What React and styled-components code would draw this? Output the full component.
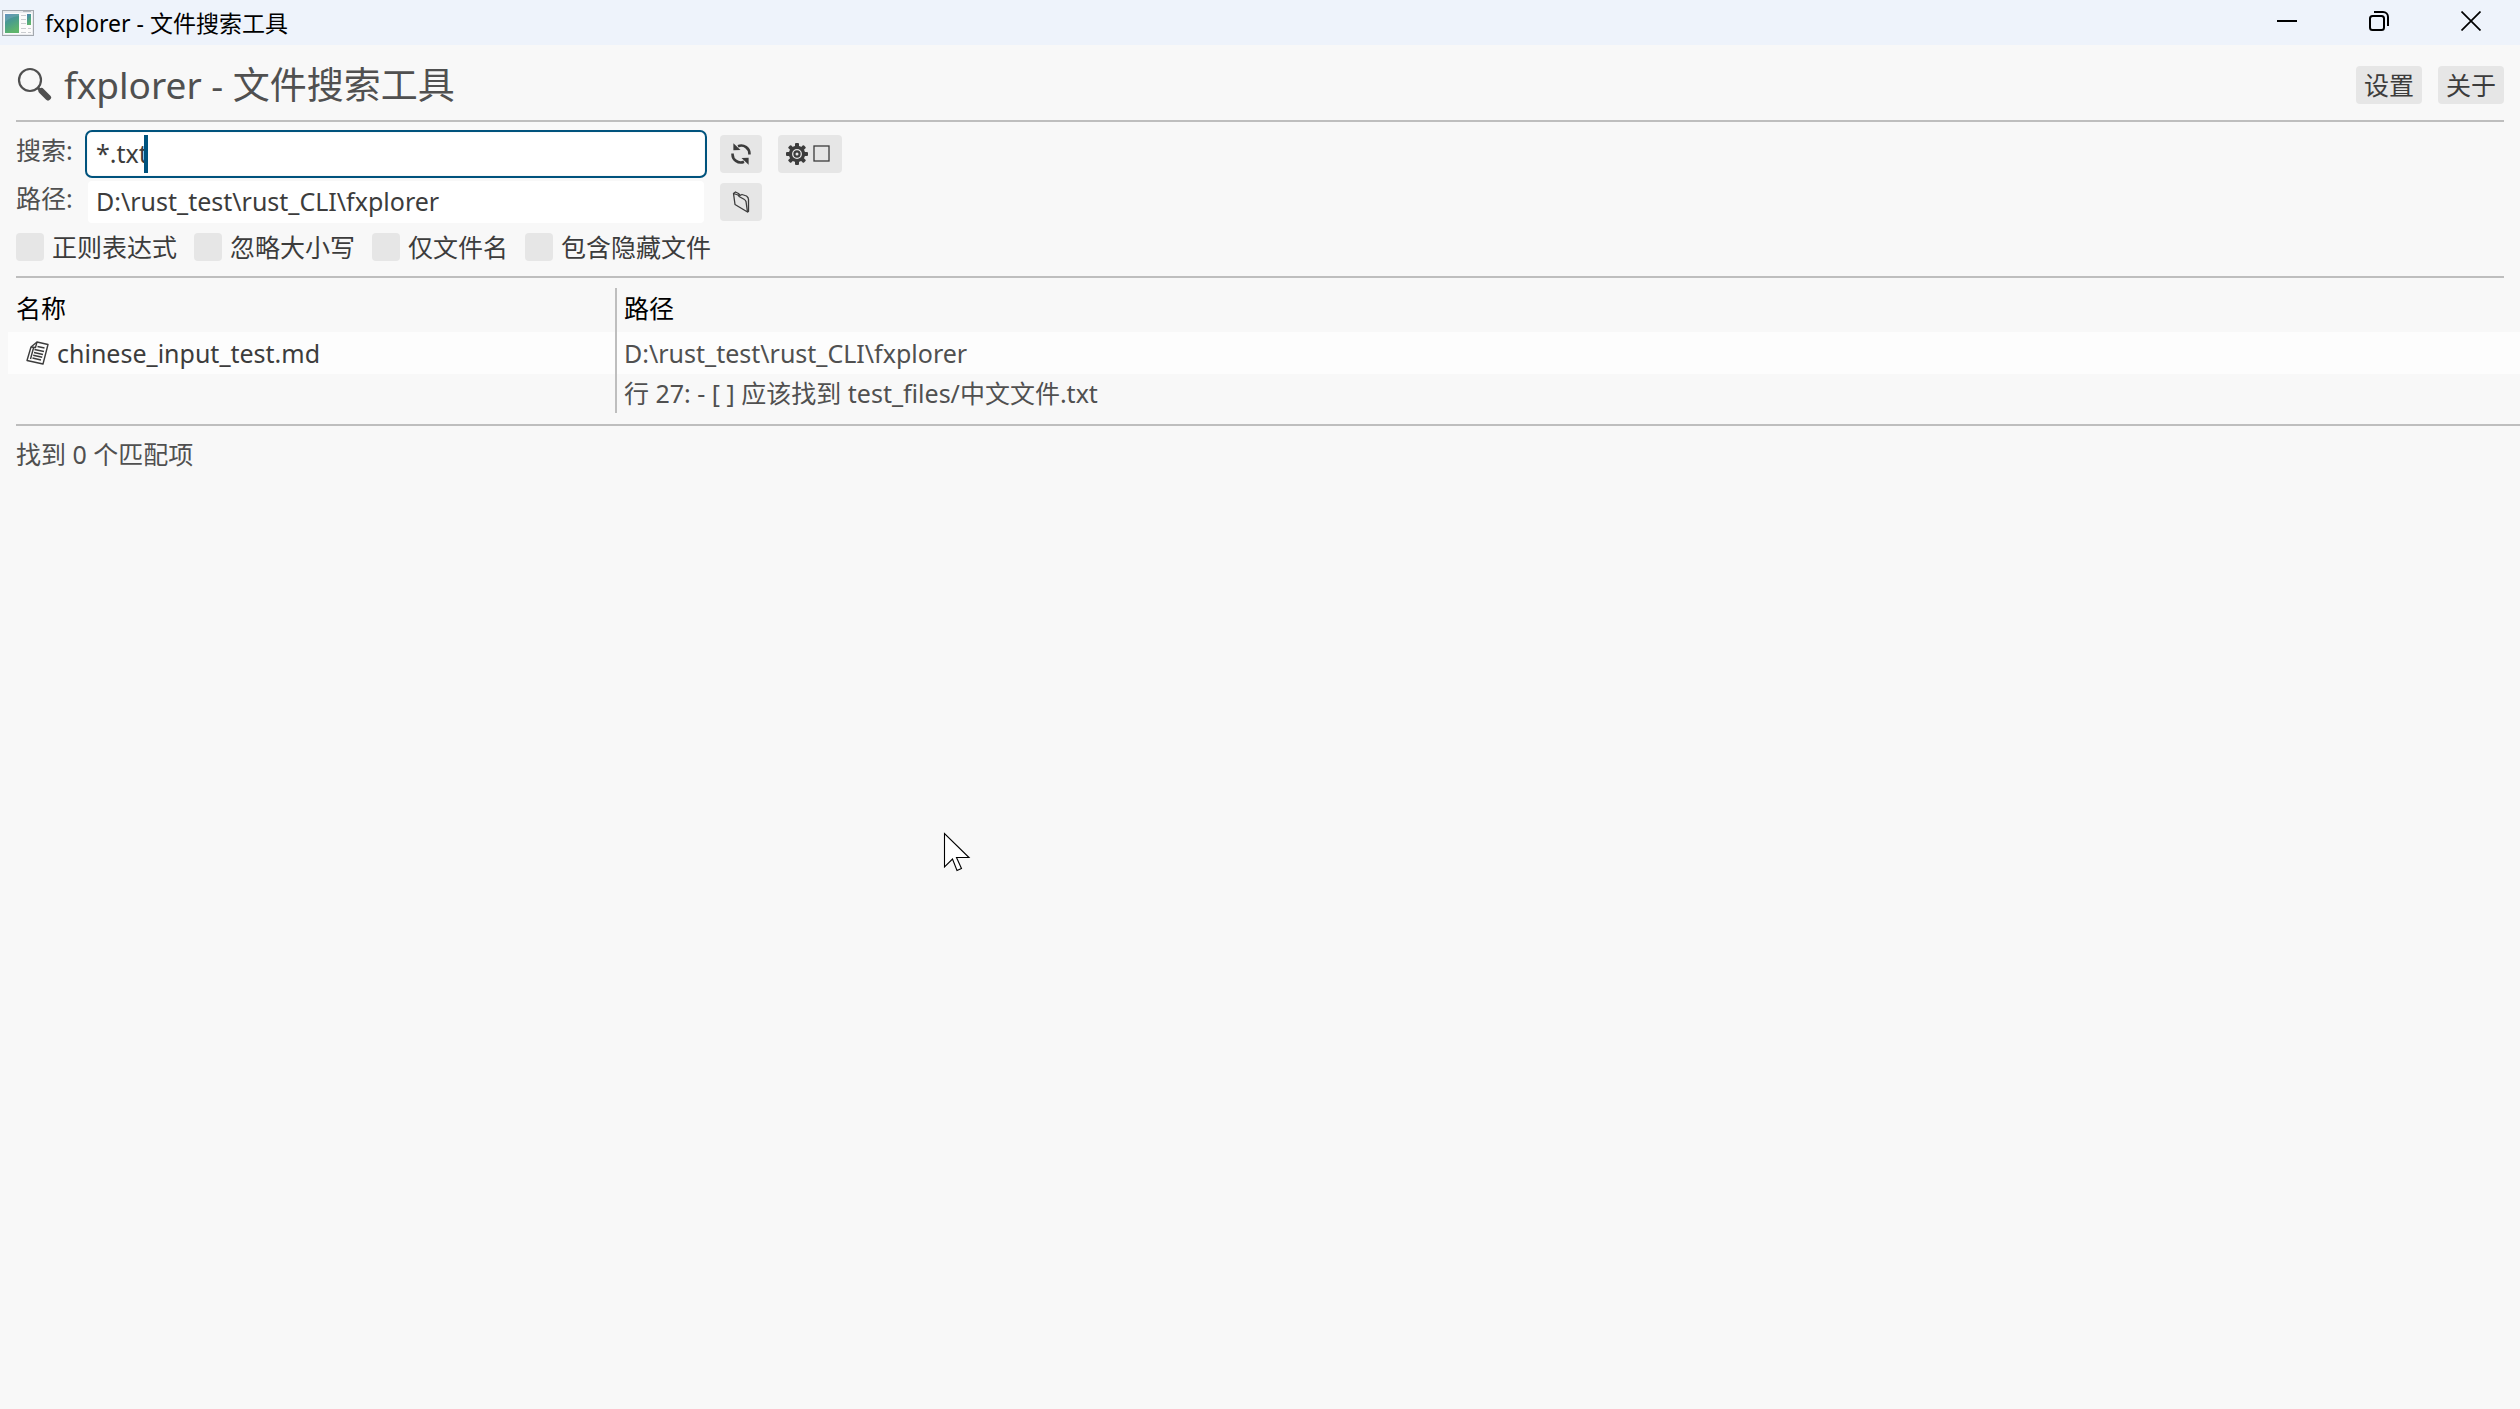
import React from "react";
import styled, { createGlobalStyle, css } from "styled-components";

const GlobalStyle = createGlobalStyle`
  *, *::before, *::after { box-sizing: border-box; }
  body {
    margin: 0;
    background: #f8f8f8;
    color: #505050;
    font-family: "Noto Sans", "Noto Sans CJK SC", sans-serif;
    font-size: 25px;
    line-height: 40px;
  }
  button, input { font: inherit; color: inherit; }
`;

const Window = styled.div`
  min-height: 100vh;
  display: flex;
  flex-direction: column;
`;

const TitleBar = styled.header`
  height: 45px;
  padding: 0 3px 0 2px;
  display: flex;
  align-items: center;
  background: #eef3fb;
  color: #000;
`;

const WindowTitle = styled.span`
  margin-left: 11px;
  flex: 1;
  font-size: 23px;
  line-height: 44px;
`;

const WindowButton = styled.button`
  width: 92px;
  height: 42px;
  align-self: flex-start;
  display: grid;
  place-items: center;
  border: 0;
  padding: 0;
  background: transparent;
`;

const Toolbar = styled.div`
  display: flex;
  align-items: center;
  gap: 16px;
  padding: 14px 16px 10px;
`;

const Heading = styled.h1`
  margin: 0;
  flex: 1;
  display: flex;
  align-items: center;
  gap: 12px;
  font-size: 37px;
  font-weight: 400;
  line-height: 51px;
`;

const Button = styled.button`
  height: 38px;
  min-width: 42px;
  padding: 0 8px;
  display: flex;
  align-items: center;
  justify-content: center;
  gap: 5px;
  border: 0;
  border-radius: 4px;
  background: #e6e6e6;
  color: #3c3c3c;
  line-height: 38px;
`;

const Divider = styled.hr`
  height: 2px;
  margin: 0 ${(p) => (p.$toEdge ? 0 : 16)}px 0 16px;
  border: 0;
  background: #bebebe;
`;

const Form = styled.form`
  padding: 8px 16px;
`;

const FieldRow = styled.div`
  display: flex;
  align-items: center;
  height: 48px;
  gap: 16px;
`;

const FieldLabel = styled.label`
  width: 56px;
  height: 48px;
  white-space: nowrap;
`;

const Field = styled.div`
  position: relative;
  width: 616px;
  height: 42px;
`;

const TextInput = styled.input`
  display: block;
  width: 100%;
  height: 42px;
  padding: 0 8px 2px;
  border: 0;
  border-radius: 4px;
  background: #fff;
  color: #3c3c3c;
  caret-color: transparent;
  ${(p) =>
    p.$active &&
    css`
      outline: 2px solid #00537d;
      outline-offset: 1px;
    `}
`;

const Caret = styled.span`
  position: absolute;
  left: 56px;
  top: 2px;
  width: 4px;
  height: 38px;
  background: #00537d;
`;

const Options = styled.div`
  display: flex;
  gap: 17px;
  height: 42px;
`;

const Option = styled.label`
  display: flex;
  align-items: center;
  gap: 8px;
  color: #3c3c3c;
`;

const Checkbox = styled.input`
  appearance: none;
  width: 28px;
  height: 28px;
  margin: 0;
  border-radius: 4px;
  background: #e6e6e6;
`;

const Results = styled.table`
  width: calc(100% - 8px);
  margin: 10px 0 11px 8px;
  border-collapse: collapse;
  table-layout: fixed;
  text-align: left;

  th, td { padding: 0 8px; vertical-align: top; }
  th + th, td + td { padding-left: 7px; border-left: 2px solid #bebebe; }
`;

const NameColumn = styled.col`
  width: 608px;
`;

const HeadCell = styled.th`
  height: 44px;
  color: #000;
  font-weight: 400;
`;

const Row = styled.tr`
  height: ${(p) => (p.$striped ? 42 : 39)}px;
  line-height: ${(p) => (p.$striped ? 42 : 39)}px;
  background: ${(p) => (p.$striped ? "#fdfdfd" : "transparent")};
`;

const FileName = styled.span`
  display: flex;
  align-items: center;
  gap: 8px;
  padding-left: 10px;
  color: #3c3c3c;
`;

const Status = styled.footer`
  padding: 8px 16px;
`;

const Pointer = styled.svg`
  position: fixed;
  left: 943px;
  top: 832px;
  pointer-events: none;
`;

const AppIcon = () => (
  <svg width="32" height="26" viewBox="0 0 32 26" aria-hidden="true">
    <defs>
      <linearGradient id="pane" x1="0" y1="0" x2="0.4" y2="1">
        <stop offset="0" stopColor="#4d83b5" />
        <stop offset="0.5" stopColor="#4a9d8c" />
        <stop offset="1" stopColor="#5fb56c" />
      </linearGradient>
    </defs>
    <rect x="0.5" y="0.5" width="31" height="25" fill="#e9ebee" stroke="#a3a8ae" />
    <rect x="2" y="3" width="28" height="21" fill="#fbfbfb" />
    <path d="M21 1.5h8" stroke="#b5babf" />
    <rect x="3" y="4" width="14" height="19" fill="url(#pane)" />
    <path d="M3 12Q8 7 17 6V4H3z" fill="#fff" opacity="0.12" />
    <path d="M19 5.500h5M19 9.500h5M19 13.500h5M19 18.500h5M19 22.500h5M26 18.500h3M26 22.500h3" stroke="#c9cccf" />
    <rect x="25" y="4" width="4" height="11" fill="url(#pane)" />
  </svg>
);

const SearchIcon = () => (
  <svg width="36" height="36" viewBox="0 0 36 36" fill="none" aria-hidden="true">
    <circle cx="14" cy="13" r="11" stroke="#505050" strokeWidth="2.200" />
    <path d="M21.500 20.500l3 3" stroke="#505050" strokeWidth="3" />
    <path d="M25.500 24l6.500 6.500" stroke="#505050" strokeWidth="6" strokeLinecap="round" />
  </svg>
);

const RefreshIcon = () => (
  <svg width="22" height="22" viewBox="0 0 22 22" aria-hidden="true">
    <g id="half">
      <path d="M8 3.200A8.200 8.200 0 0 1 19.400 11.500" fill="none" stroke="#3c3c3c" strokeWidth="2.600" />
      <path d="M3.400 0.200V7.300L10.500 7z" fill="#3c3c3c" />
    </g>
    <use href="#half" transform="rotate(180 11 11)" />
  </svg>
);

const GearIcon = () => (
  <svg width="22" height="22" viewBox="-11 -11 22 22" aria-hidden="true">
    {[0, 45, 90, 135].map((a) => (
      <rect key={a} x="-2" y="-11" width="4" height="22" rx="1" fill="#3c3c3c" transform={`rotate(${a})`} />
    ))}
    <circle r="8.200" fill="#3c3c3c" />
    <circle r="4.300" fill="none" stroke="#e6e6e6" strokeWidth="1.300" />
    <circle r="1.500" fill="#e6e6e6" />
  </svg>
);

const BoxIcon = () => (
  <svg width="21" height="18" viewBox="0 0 21 18" aria-hidden="true">
    <rect x="1" y="1" width="15" height="15" fill="none" stroke="#3c3c3c" strokeWidth="1.300" />
  </svg>
);

const FolderIcon = () => (
  <svg width="18" height="22" viewBox="0 0 18 22" fill="none" stroke="#3c3c3c" strokeWidth="1.300" strokeLinejoin="round" aria-hidden="true">
    <path d="M1.500 2.500L3 13.500 15.500 21 14 10.500Q13.500 9 12 8.200L7.500 5.700 6 4z" />
    <path d="M1.500 2.500L3.500 1 6.500 2.500 8 4.500 10 3.500 14.500 5Q16.500 6.500 16.500 8.500V20.500L15.500 21" />
  </svg>
);

const DocumentIcon = () => (
  <svg width="23" height="24" viewBox="0 0 23 24" fill="none" stroke="#3c3c3c" strokeWidth="1.400" strokeLinejoin="round" aria-hidden="true">
    <path d="M11 1L22 3.500 17 23 1 19.500 5 6z" />
    <path d="M5 6L9.500 6.500 11 1M4.500 18L7.500 7" />
    <path d="M11.500 5.500l7 1.500M8.500 8.500l9.500 2M8 11.500l9 2M7.200 14.200l9 2M6.500 17l8.500 2" />
  </svg>
);

const MinimizeIcon = () => (
  <svg width="20" height="20" viewBox="0 0 20 20" aria-hidden="true">
    <path d="M0 10h20" stroke="#000" strokeWidth="2" />
  </svg>
);

const RestoreIcon = () => (
  <svg width="20" height="20" viewBox="0 0 20 20" fill="none" stroke="#000" strokeWidth="2" aria-hidden="true">
    <rect x="1" y="5" width="14" height="14" rx="2.500" />
    <path d="M5 1h9a5 5 0 0 1 5 5v9" />
  </svg>
);

const CloseIcon = () => (
  <svg width="20" height="20" viewBox="0 0 20 20" aria-hidden="true">
    <path d="M0.500 0.500l19 19M19.500 0.500l-19 19" stroke="#000" strokeWidth="1.700" />
  </svg>
);

const options = ["正则表达式", "忽略大小写", "仅文件名", "包含隐藏文件"];

export default function App() {
  return (
    <Window>
      <GlobalStyle />
      <TitleBar>
        <AppIcon />
        <WindowTitle>fxplorer - 文件搜索工具</WindowTitle>
        <WindowButton type="button"><MinimizeIcon /></WindowButton>
        <WindowButton type="button"><RestoreIcon /></WindowButton>
        <WindowButton type="button"><CloseIcon /></WindowButton>
      </TitleBar>
      <Toolbar>
        <Heading>
          <SearchIcon />
          fxplorer - 文件搜索工具
        </Heading>
        <Button type="button">设置</Button>
        <Button type="button">关于</Button>
      </Toolbar>
      <Divider />
      <Form>
        <FieldRow>
          <FieldLabel htmlFor="query">搜索:</FieldLabel>
          <Field>
            <TextInput id="query" defaultValue="*.txt" $active />
            <Caret />
          </Field>
          <Button type="button"><RefreshIcon /></Button>
          <Button type="button"><GearIcon /><BoxIcon /></Button>
        </FieldRow>
        <FieldRow>
          <FieldLabel htmlFor="path">路径:</FieldLabel>
          <Field>
            <TextInput id="path" defaultValue={"D:\\rust_test\\rust_CLI\\fxplorer"} />
          </Field>
          <Button type="button"><FolderIcon /></Button>
        </FieldRow>
        <Options>
          {options.map((name) => (
            <Option key={name}>
              <Checkbox type="checkbox" />
              {name}
            </Option>
          ))}
        </Options>
      </Form>
      <Divider />
      <Results>
        <colgroup>
          <NameColumn />
          <col />
        </colgroup>
        <thead>
          <tr>
            <HeadCell>名称</HeadCell>
            <HeadCell>路径</HeadCell>
          </tr>
        </thead>
        <tbody>
          <Row $striped>
            <td><FileName><DocumentIcon />chinese_input_test.md</FileName></td>
            <td>{"D:\\rust_test\\rust_CLI\\fxplorer"}</td>
          </Row>
          <Row>
            <td />
            <td>行 27: - [ ] 应该找到 test_files/中文文件.txt</td>
          </Row>
        </tbody>
      </Results>
      <Divider $toEdge />
      <Status>找到 0 个匹配项</Status>
      <Pointer width="28" height="42" viewBox="0 0 28 42" aria-hidden="true">
        <path d="M1.500 1.500V35L9.500 27 14 38.500 18.500 36.500 13.500 25.500H26z" fill="#fff" stroke="#000" strokeWidth="1.100" />
      </Pointer>
    </Window>
  );
}
